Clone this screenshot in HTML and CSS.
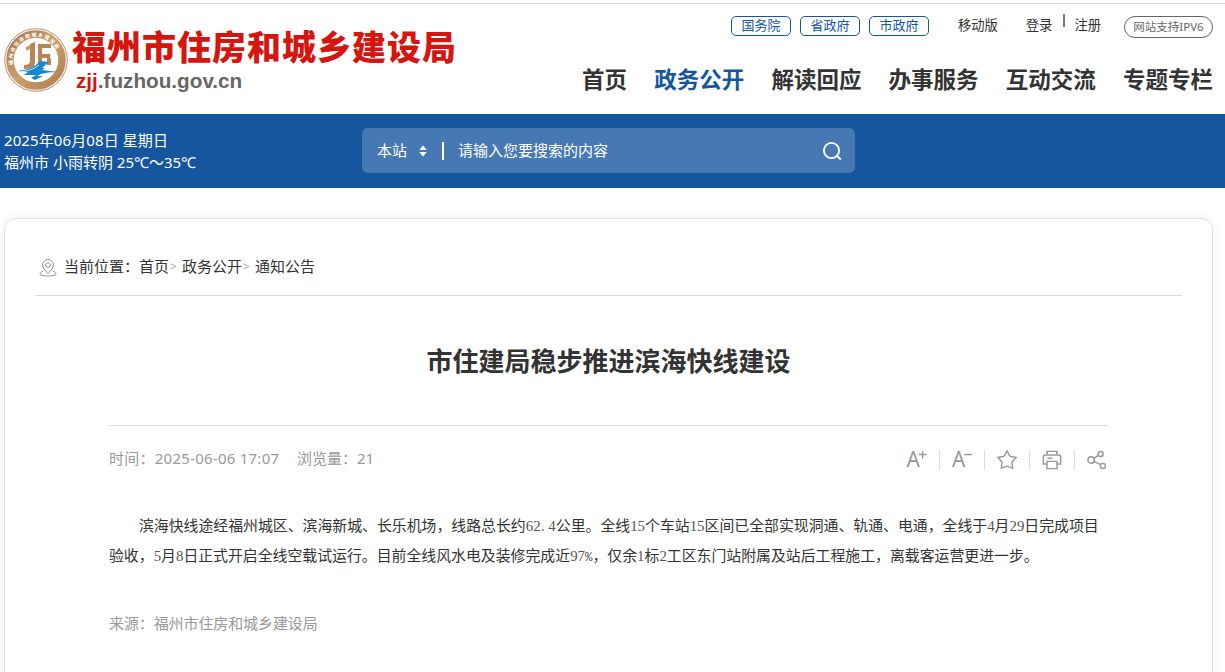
FILE: index.html
```html
<!DOCTYPE html>
<html lang="zh-CN">
    <head>
        <meta charset="utf-8">
        <title>市住建局稳步推进滨海快线建设</title>
        <link rel="stylesheet" href="styles.css">
    </head>
    <body>
        <div class="header">
            <div class="logo">
                <svg class="emblem" width="66" height="66" viewBox="0 0 66 66">
                    <defs>
                        <linearGradient id="gold" x1="0" y1="0" x2="1" y2="1">
                            <stop offset="0" stop-color="#a97850"/>
                            <stop offset=".5" stop-color="#cda06f"/>
                            <stop offset="1" stop-color="#b07b4e"/>
                        </linearGradient>
                        <path id="ring" d="M10.5 39A23.3 23.3 0 1 1 55.5 39"/>
                    </defs>
                    <circle cx="33" cy="33" r="31.3" fill="#fff" stroke="#c09068" stroke-width="1"/>
                    <circle cx="33" cy="33" r="26" fill="none" stroke="url(#gold)" stroke-width="7.5"/>
                    <text class="ringText"><textPath href="#ring" startOffset="1">福州市住房和城乡建设局</textPath></text>
                    <path d="M27 17l5-2v21q0 6-11 6v-4q6 0 6-4z" fill="#b98558"/>
                    <path d="M23 20l4-2v4l-4 2z" fill="#c99a6c"/>
                    <path d="M35 17h13v4h-9v6h8v4h-8v8h-4z" fill="#b98558"/>
                    <path d="M44 31h4v7h-4z" fill="#b98558"/>
                    <path d="M14 44q16-1 23-10l9 1-7 6h3l-3 2 16 2q-11 0-17 2l-4 2h6l-8 4-4-2 5-3-12 0 4-3z" fill="#1688cb"/>
                    <path d="M18 45q12-2 18-7" fill="none" stroke="#fff" stroke-width=".8"/>
                </svg>
                <div class="logoText">
                    <div class="siteName">福州市住房和城乡建设局</div>
                    <div class="siteUrl"><span>zjj</span>.fuzhou.gov.cn</div>
                </div>
            </div>
            <div class="headRight">
                <div class="topLinks">
                    <a class="gov">国务院</a>
                    <a class="gov">省政府</a>
                    <a class="gov">市政府</a>
                    <a class="mobile">移动版</a>
                    <a>登录</a>
                    <i class="line"></i>
                    <a>注册</a>
                    <a class="ipv6">网站支持IPV6</a>
                </div>
                <div class="nav">
                    <a>首页</a>
                    <a class="on">政务公开</a>
                    <a>解读回应</a>
                    <a>办事服务</a>
                    <a>互动交流</a>
                    <a>专题专栏</a>
                </div>
            </div>
        </div>

        <div class="banner">
            <div class="weather">
                <p class="date">2025年06月08日 星期日</p>
                <p class="temp">福州市 小雨转阴 25℃～35℃</p>
            </div>
            <div class="search">
                <span class="site">本站</span>
                <svg class="arrows" width="8" height="12" viewBox="0 0 8 12" fill="#fff"><path d="M4 .5L7.8 5H.2zM4 11.500L.2 7h7.600z"/></svg>
                <i class="bar"></i>
                <span class="hint">请输入您要搜索的内容</span>
                <svg class="glass" width="20" height="20" viewBox="0 0 20 20" fill="none" stroke="#fff" stroke-width="1.9"><circle cx="9.500" cy="9.500" r="7.600"/><path d="M14.800 14.800l4 3.700"/></svg>
            </div>
        </div>

        <div class="card">
            <div class="crumb">
                <svg width="18" height="18" viewBox="0 0 18 18" fill="none" stroke="#999" stroke-width="1">
                    <path d="M9 14.500Q3.500 9.500 3.500 6a5.500 5.500 0 0 1 11 0Q14.500 9.500 9 14.500z"/>
                    <circle cx="9" cy="6" r="2.300"/>
                    <path d="M4.500 12Q1 13.200 1 14.800 1 17 9 17t8-2.200Q17 13.200 13.500 12"/>
                </svg>
                <span>当前位置：</span><a>首页</a><b>&gt;</b><a>政务公开</a><b>&gt;</b><a>通知公告</a>
            </div>
            <div class="article">
                <h1>市住建局稳步推进滨海快线建设</h1>
                <div class="meta">
                    <span class="time">时间：2025-06-06 17:07</span>
                    <span class="views">浏览量：21</span>
                    <div class="tools">
                        <svg width="22" height="22" viewBox="0 0 22 22"><text x="0" y="19">A</text><path d="M13.500 5h8.500M17.700 1v8.500"/></svg>
                        <svg width="22" height="22" viewBox="0 0 22 22"><text x="0" y="19">A</text><path d="M13.500 5h8.500"/></svg>
                        <svg width="22" height="22" viewBox="0 0 22 22"><path d="M11 1l3.300 5.900 6.700 1.400-4.500 4.900.700 6.900-6.200-2.300-6.200 2.300.700-6.900L1 8.300l6.700-1.400z"/></svg>
                        <svg width="22" height="22" viewBox="0 0 22 22"><path d="M5.500 5.500V1.500h11v4M5.500 15.500h-4v-8q0-2 2-2h15q2 0 2 2v8h-4M5.500 12.500h11v8h-11zM6 9h5.500"/></svg>
                        <svg width="22" height="22" viewBox="0 0 22 22"><circle cx="4.500" cy="11" r="3.500"/><circle cx="15" cy="4.500" r="2.800"/><circle cx="17.500" cy="17.500" r="2.800"/><path d="M7.500 9.300l5-3.400M7.800 12.500l7.200 3.700"/></svg>
                    </div>
                </div>
                <p class="content">滨海快线途经福州城区、滨海新城、长乐机场，线路总长约<i class="dec">62.</i><i>4</i>公里。全线<i>15</i>个车站<i>15</i>区间已全部实现洞通、轨通、电通，全线于<i>4</i>月<i>29</i>日完成项目验收，<i>5</i>月<i>8</i>日正式开启全线空载试运行。目前全线风水电及装修完成近<i>97</i><i class="pct">%</i>，仅余<i>1</i>标<i>2</i>工区东门站附属及站后工程施工，离载客运营更进一步。</p>
                <p class="source">来源：福州市住房和城乡建设局</p>
            </div>
        </div>
    </body>
</html>
```
FILE: styles.css
```css
*
{
    margin: 0;
    padding: 0;
    box-sizing: border-box;
}

body
{
    height: 672px;
    overflow: hidden;
    background-color: #fff;
    border-top: 1px solid #fff;
    font-family: "Noto Sans", "Noto Sans CJK SC", sans-serif;
    font-size: 15px;
    color: #333;
    text-spacing-trim: space-all;
}

i, b
{
    font-style: normal;
    font-weight: normal;
}

a, span
{
    white-space: nowrap;
}

/* header */
.header
{
    display: flex;
    justify-content: space-between;
    height: 111px;
    margin-top: 2px;
    padding: 0 12px 0 3px;
    border-top: 1px solid #ddd;
}

.logo
{
    display: flex;
    padding-top: 23px;
}

.ringText
{
    font: bold 5px "Noto Sans CJK SC", sans-serif;
    fill: #fff;
    letter-spacing: 1.2px;
}

.logoText
{
    padding-left: 3px;
}

.siteName
{
    height: 43px;
    line-height: 37px;
    font-family: "Noto Sans CJK SC", sans-serif;
    font-size: 34px;
    font-weight: 900;
    letter-spacing: 1px;
    color: #d5150f;
    white-space: nowrap;
}

.siteUrl
{
    padding-left: 4px;
    line-height: 22px;
    font-family: "Liberation Sans", sans-serif;
    font-size: 20.7px;
    font-weight: bold;
    color: #666;
}

.siteUrl span
{
    color: #d5150f;
}

.topLinks
{
    display: flex;
    justify-content: flex-end;
    align-items: flex-start;
    height: 49px;
    padding-top: 12px;
    font-size: 13.3px;
    line-height: 18px;
}

.gov
{
    width: 60px;
    height: 20px;
    margin-right: 9px;
    border: 1px solid #15569f;
    border-radius: 5px;
    font-size: 13px;
    line-height: 17px;
    text-align: center;
    color: #15569f;
}

.mobile
{
    margin: 0 28px 0 20px;
}

.line
{
    width: 2px;
    height: 13px;
    margin: -2px 9px 0 11px;
    background-color: #777;
}

.ipv6
{
    width: 89px;
    height: 22px;
    margin-left: 23px;
    border: 1px solid #666;
    border-radius: 11px;
    font-size: 11.5px;
    line-height: 20px;
    text-align: center;
    color: #666;
}

.nav
{
    display: flex;
    gap: 27.2px;
    font-size: 22.5px;
    font-weight: bold;
    line-height: 54px;
}

.nav .on
{
    color: #15569f;
}

/* blue banner */
.banner
{
    display: flex;
    height: 74px;
    background-color: #15569f;
    color: #fff;
}

.weather
{
    width: 362px;
    padding: 15px 0 0 4px;
    line-height: 22px;
}

.date
{
    letter-spacing: 0.1px;
}

.search
{
    display: flex;
    align-items: center;
    width: 493px;
    height: 45px;
    margin-top: 14px;
    padding: 0 13px 0 15px;
    border-radius: 6px;
    background-color: #4679b3;
}

.search span
{
    margin-top: -2px;
}

.arrows
{
    margin-left: 12px;
}

.bar
{
    width: 2px;
    height: 18px;
    margin: 0 14px 0 15px;
    background-color: #fff;
}

.glass
{
    margin-left: auto;
}

/* article card */
.card
{
    height: 480px;
    margin: 30px 12px 0 4px;
    padding: 0 30px;
    border: 1px solid #e2e2e2;
    border-radius: 12px;
    box-shadow: 0 0 8px rgba(0,0,0,0.08);
}

.crumb
{
    display: flex;
    align-items: center;
    height: 77px;
    padding: 17px 0 0 4px;
    border-bottom: 1px solid #ddd;
}

.crumb svg
{
    margin-top: 4px;
}

.crumb span
{
    margin-left: 7px;
}

.crumb b
{
    width: 13px;
    padding: 2px 0 0 1px;
    font-size: 12px;
    color: #aaa;
}

.article
{
    margin: 0 74px;
}

h1
{
    height: 130px;
    line-height: 131px;
    border-bottom: 1px solid #ddd;
    font-size: 26px;
    text-align: center;
}

.meta
{
    display: flex;
    align-items: center;
    height: 68px;
    color: #999;
}

.meta span
{
    margin-top: -5px;
}

.time
{
    width: 188px;
    letter-spacing: 0.25px;
}

.tools
{
    display: flex;
    margin: -1px 0 0 auto;
}

.tools svg
{
    width: 45px;
    height: 20px;
    padding: 0 11px;
    border-left: 1px solid #ddd;
    overflow: visible;
    fill: none;
    stroke: #999;
    stroke-width: 1.6;
}

.tools svg:first-child
{
    border-left: 0;
}

.tools svg:last-child
{
    width: 34px;
    padding-right: 0;
}

.tools text
{
    font: 23px "Noto Sans", sans-serif;
    fill: #999;
    stroke: none;
}

.content
{
    margin-top: 16px;
    text-indent: 30px;
    line-height: 30px;
    font-family: "Noto Sans CJK SC", sans-serif;
    font-size: 14.88px;
}

.content i
{
    font-family: "Liberation Serif", serif;
    line-height: 1;
    color: #555;
}

.content .dec
{
    padding-right: 4px;
}

.content .pct
{
    font-family: "Liberation Mono", monospace;
    font-size: 12.4px;
}

.source
{
    margin-top: 38px;
    line-height: 30px;
    letter-spacing: -0.1px;
    color: #999;
}
```
